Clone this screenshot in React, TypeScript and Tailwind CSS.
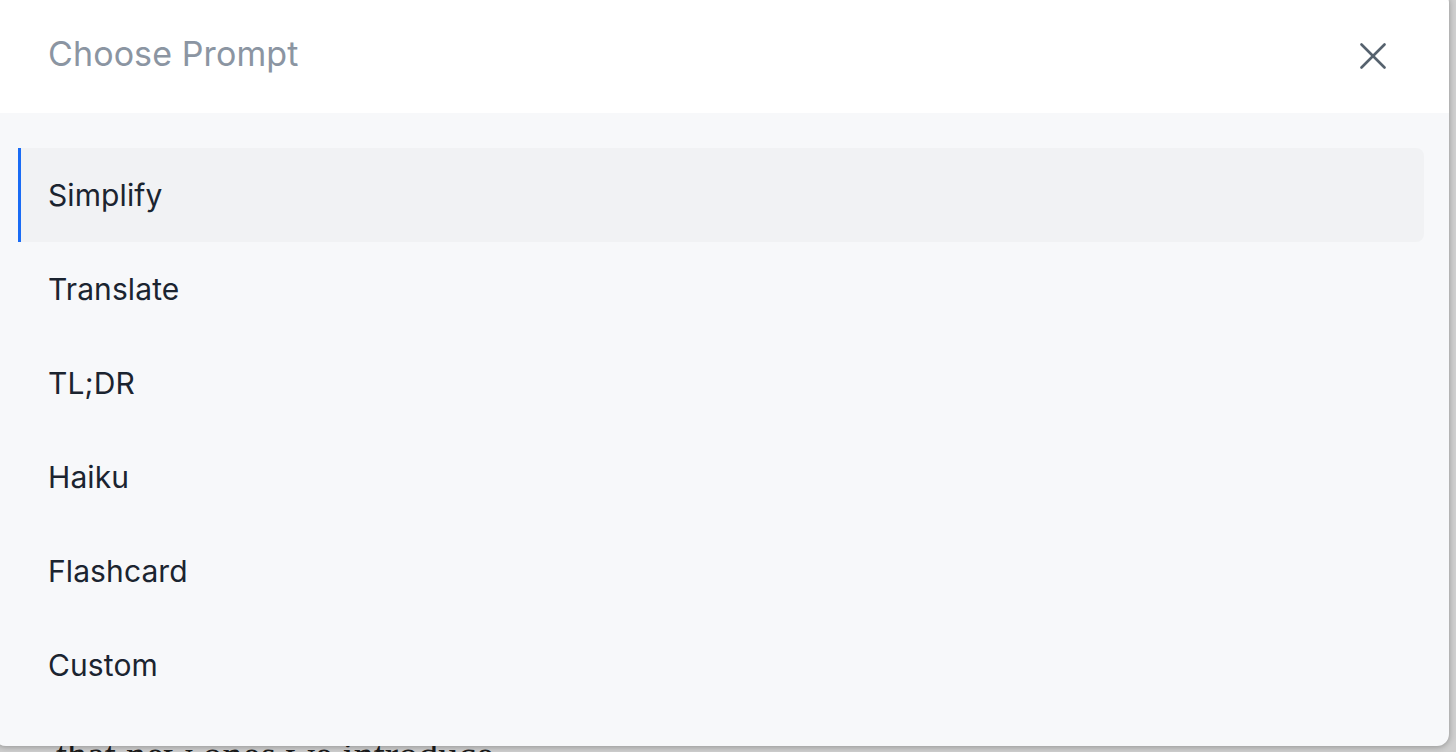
import React, { useState } from 'react';

const prompts = ['Simplify', 'Translate', 'TL;DR', 'Haiku', 'Flashcard', 'Custom'];

export default function App() {
  const [selected, setSelected] = useState('Simplify');

  return (
    <div className="relative w-full h-[752px] overflow-hidden bg-[#cfcfcf] font-['Inter',sans-serif]">
      {/* page behind the dialog */}
      <div className="pt-[736px] pl-[56px]">
        <p className="font-['Liberation_Serif',serif] text-[40px] leading-[40px] text-[#1c1c1c] whitespace-nowrap">
          that new ones we introduce.
        </p>
      </div>

      {/* Dialog */}
      <div className="absolute left-[-6px] top-[-8px] w-[1455px] h-[754px] rounded-[12px] overflow-hidden bg-[#f7f8fa] shadow-[0_1px_6px_rgba(0,0,0,0.3)] flex flex-col">
        <div className="h-[121px] shrink-0 bg-white flex items-center justify-between pl-[54px] pr-[63px] pt-[2px]">
          <h2 className="text-[34px] leading-none text-[#8b95a2] font-normal tracking-[0.1px]">Choose Prompt</h2>
          <button className="w-[26px] h-[26px] flex items-center justify-center text-[#56626e] mt-[4px]">
            <svg width="26" height="26" viewBox="0 0 26 26" fill="none" stroke="currentColor" strokeWidth="2.6" strokeLinecap="round">
              <path d="M1.5 1.5 24.5 24.5" />
              <path d="M24.5 1.5 1.5 24.5" />
            </svg>
          </button>
        </div>

        <div className="flex-1 pt-[35px] pl-[24px] pr-[25px] flex flex-col">
          {prompts.map((p) => {
            const active = p === selected;
            return (
              <button
                key={p}
                onClick={() => setSelected(p)}
                className={`h-[94px] shrink-0 flex items-center text-left pl-[27px] border-l-[3px] text-[30px] tracking-[0.1px] text-[#1b2430] ${
                  active
                    ? 'bg-[#f1f2f4] border-[#1a6cf5] rounded-r-[8px]'
                    : 'border-transparent'
                }`}
              >
                {p}
              </button>
            );
          })}
        </div>
      </div>
    </div>
  );
}
